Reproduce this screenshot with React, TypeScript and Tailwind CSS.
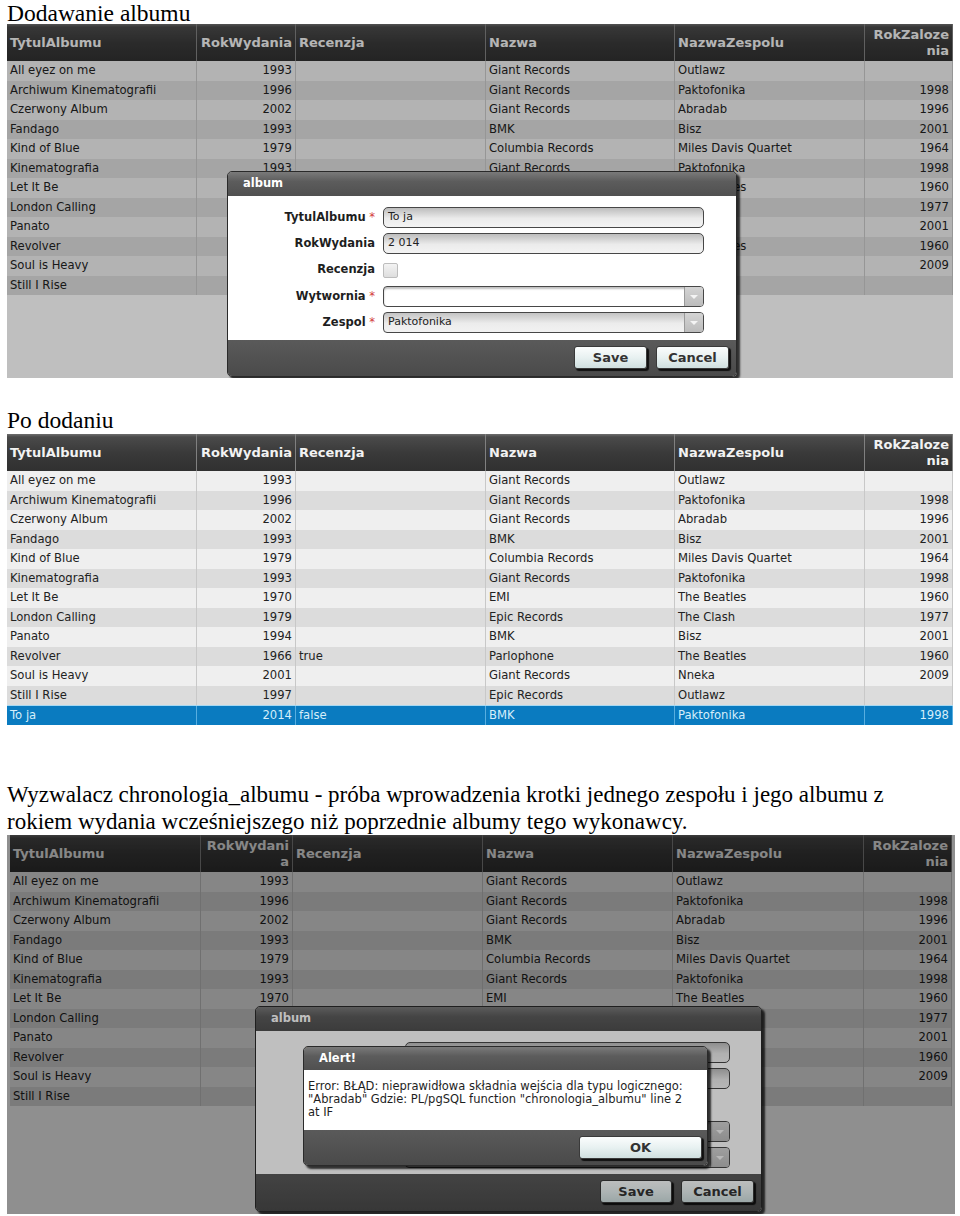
import React from "react";

type Row = [string, string, string, string, string, string];

const DATA: Row[] = [
  ["All eyez on me", "1993", "", "Giant Records", "Outlawz", ""],
  ["Archiwum Kinematografii", "1996", "", "Giant Records", "Paktofonika", "1998"],
  ["Czerwony Album", "2002", "", "Giant Records", "Abradab", "1996"],
  ["Fandago", "1993", "", "BMK", "Bisz", "2001"],
  ["Kind of Blue", "1979", "", "Columbia Records", "Miles Davis Quartet", "1964"],
  ["Kinematografia", "1993", "", "Giant Records", "Paktofonika", "1998"],
  ["Let It Be", "1970", "", "EMI", "The Beatles", "1960"],
  ["London Calling", "1979", "", "Epic Records", "The Clash", "1977"],
  ["Panato", "1994", "", "BMK", "Bisz", "2001"],
  ["Revolver", "1966", "true", "Parlophone", "The Beatles", "1960"],
  ["Soul is Heavy", "2001", "", "Giant Records", "Nneka", "2009"],
  ["Still I Rise", "1997", "", "Epic Records", "Outlawz", ""],
];
const NEW_ROW: Row = ["To ja", "2014", "false", "BMK", "Paktofonika", "1998"];

const HEAD_BG =
  "bg-[linear-gradient(to_bottom,#6e6e6e_0px,#4a4a4a_3px,#3a3a3a_50%,#303030_100%)]";

function Grid({
  cols,
  rows,
  selected,
  narrow,
}: {
  cols: string;
  rows: Row[];
  selected?: Row;
  narrow?: boolean;
}) {
  const right = (i: number) => i === 1 || i === 5;
  return (
    <div className="flex flex-col">
      <div className={`grid ${cols} h-[37px] ${HEAD_BG}`}>
        {["TytulAlbumu", "RokWydania", "Recenzja", "Nazwa", "NazwaZespolu", "RokZalozenia"].map((h, i) => (
          <div
            key={h}
            className={`flex items-center px-[3px] border-r border-[#808080] text-[13px] font-bold text-[#f2f2f2] leading-[16px] whitespace-nowrap overflow-hidden ${
              right(i) ? "justify-end text-right" : "justify-start"
            }`}
          >
            {i === 5 ? (
              <span>
                RokZaloze
                <br />
                nia
              </span>
            ) : i === 1 && narrow ? (
              <span>
                RokWydani
                <br />a
              </span>
            ) : (
              h
            )}
          </div>
        ))}
      </div>
      {rows.map((r, ri) => (
        <div
          key={ri}
          className={`grid ${cols} h-[19.5px] ${ri % 2 === 0 ? "bg-[#efefef]" : "bg-[#dcdcdc]"}`}
        >
          {r.map((c, ci) => (
            <div
              key={ci}
              className={`flex items-center px-[3px] border-r border-[#c8c8c8] text-[11.6px] text-[#222] whitespace-nowrap overflow-hidden ${
                right(ci) ? "justify-end" : "justify-start"
              }`}
            >
              {c}
            </div>
          ))}
        </div>
      ))}
      {selected && (
        <div className={`grid ${cols} h-[19.5px] bg-[#0a7bc0] border-t border-[#a6d8f2]`}>
          {selected.map((c, ci) => (
            <div
              key={ci}
              className={`flex items-center px-[3px] border-r border-[#58aee0] text-[11.6px] text-[#d6eefa] whitespace-nowrap ${
                right(ci) ? "justify-end" : "justify-start"
              }`}
            >
              {c}
            </div>
          ))}
        </div>
      )}
    </div>
  );
}

function Btn({ label, className }: { label: string; className: string }) {
  return (
    <div
      className={`flex items-center justify-center rounded-[3px] border border-[#3a3a3a] bg-[linear-gradient(to_bottom,#fbfdfd,#e8f1f1_50%,#cfdfdf)] shadow-[2px_2px_1px_rgba(0,0,0,0.8)] text-[13px] font-bold text-[#333] ${className}`}
    >
      {label}
    </div>
  );
}

function Field({ value, white }: { value: string; white?: boolean }) {
  return (
    <div
      className={`h-full w-full rounded-[5px] border border-[#474747] flex items-center px-[4px] text-[11px] text-[#222] ${
        white
          ? "bg-white shadow-[inset_0_2px_2px_rgba(0,0,0,0.25)]"
          : "bg-[linear-gradient(to_bottom,#bdbdbd,#ebebeb_55%,#f3f3f3)]"
      }`}
    >
      {value}
    </div>
  );
}

function SelectF({ value, white }: { value: string; white?: boolean }) {
  return (
    <div
      className={`h-full w-full rounded-[4px] border border-[#474747] flex items-stretch overflow-hidden text-[11px] text-[#222] ${
        white
          ? "bg-white shadow-[inset_0_2px_2px_rgba(0,0,0,0.25)]"
          : "bg-[linear-gradient(to_bottom,#c4c4c4,#ececec_55%,#f2f2f2)]"
      }`}
    >
      <div className="flex-1 flex items-center px-[4px]">{value}</div>
      <div className="w-[19px] border-l border-[#9a9a9a] bg-[linear-gradient(to_bottom,#d4d4d4,#bcbcbc)] flex items-center justify-center">
        <div className="w-0 h-0 border-l-[4px] border-r-[4px] border-t-[4px] border-l-transparent border-r-transparent border-t-[#f4f4f4]" />
      </div>
    </div>
  );
}

function Label({ text, req }: { text: string; req?: boolean }) {
  return (
    <div className="flex items-center justify-end text-[11.5px] font-bold text-[#1e1e1e] whitespace-nowrap">
      {text}
      {req && <span className="text-[#d23b3b] font-normal">&nbsp;*</span>}
    </div>
  );
}

function AlbumForm({ cols, filled }: { cols: string; filled: boolean }) {
  return (
    <div className={`grid ${cols} gap-x-[8px] pt-[11px]`}>
      <div className="h-[21px] flex justify-end">
        <Label text="TytulAlbumu" req />
      </div>
      <div className="h-[21px]">
        <Field value={filled ? "To ja" : ""} />
      </div>
      <div className="h-[21px] mt-[5px] flex justify-end">
        <Label text="RokWydania" />
      </div>
      <div className="h-[21px] mt-[5px]">
        <Field value={filled ? "2 014" : ""} />
      </div>
      <div className="h-[22px] mt-[5px] flex justify-end">
        <Label text="Recenzja" />
      </div>
      <div className="h-[22px] mt-[5px] flex items-center">
        <div className="w-[15px] h-[15px] rounded-[2px] border border-[#bdbdbd] bg-[linear-gradient(to_bottom,#f3f3f3,#dedede)]" />
      </div>
      <div className="h-[21px] mt-[5px] flex justify-end">
        <Label text="Wytwornia" req />
      </div>
      <div className="h-[21px] mt-[5px]">
        <SelectF value="" white />
      </div>
      <div className="h-[21px] mt-[5px] flex justify-end">
        <Label text="Zespol" req />
      </div>
      <div className="h-[21px] mt-[5px]">
        <SelectF value={filled ? "Paktofonika" : ""} />
      </div>
    </div>
  );
}

function Window({
  className,
  title,
  titleH,
  bodyH,
  footerH,
  children,
  footer,
}: {
  className: string;
  title: string;
  titleH: string;
  bodyH: string;
  footerH: string;
  children: React.ReactNode;
  footer: React.ReactNode;
}) {
  return (
    <div
      className={`absolute flex flex-col rounded-[5px] border border-[#2a2a2a] overflow-hidden shadow-[3px_3px_2px_rgba(0,0,0,0.75)] ${className}`}
    >
      <div
        className={`${titleH} flex items-center px-[15px] bg-[linear-gradient(to_bottom,#7a7a7a,#5c5c5c_40%,#505050)] text-[11.5px] font-bold text-white`}
      >
        {title}
      </div>
      <div className={`${bodyH} bg-white`}>{children}</div>
      <div
        className={`${footerH} flex items-start justify-end gap-[9px] pt-[6px] pr-[7px] bg-[linear-gradient(to_bottom,#5a5a5a,#4a4a4a)]`}
      >
        {footer}
      </div>
    </div>
  );
}

export default function App() {
  return (
    <div className="w-[960px] h-[1216px] bg-white overflow-hidden font-['DejaVu_Sans',Verdana,sans-serif]">
      <div className="h-[24px] pl-[7px] pt-[1px] font-['Liberation_Serif',serif] text-[23.5px] leading-[24px] text-black whitespace-nowrap">
        Dodawanie albumu
      </div>

      <div className="pl-[7px]">
        <div className="relative w-[946px] h-[354px] bg-white overflow-hidden">
          <Grid cols="grid-cols-[190px_99px_190px_189px_190px_88px]" rows={DATA} />
          <div className="absolute inset-0 bg-black/25" />
          <Window
            className="left-[220px] top-[147px] w-[510px]"
            title="album"
            titleH="h-[24px]"
            bodyH="h-[144px]"
            footerH="h-[36px]"
            footer={
              <>
                <Btn label="Save" className="w-[73px] h-[23px]" />
                <Btn label="Cancel" className="w-[73px] h-[23px]" />
              </>
            }
          >
            <AlbumForm cols="grid-cols-[147px_321px]" filled />
          </Window>
        </div>
      </div>

      <div className="h-[56px] flex items-end pl-[7px] pb-[2px] font-['Liberation_Serif',serif] text-[23.5px] leading-[24px] text-black">
        Po dodaniu
      </div>

      <div className="pl-[7px]">
        <div className="w-[946px] h-[291px] overflow-hidden bg-white">
          <Grid cols="grid-cols-[190px_99px_190px_189px_190px_88px]" rows={DATA} selected={NEW_ROW} />
        </div>
      </div>

      <div className="mt-[56px] pl-[7px] font-['Liberation_Serif',serif] text-[23px] leading-[27px] text-black whitespace-nowrap">
        Wyzwalacz chronologia_albumu - próba wprowadzenia krotki jednego zespołu i jego albumu z
        <br />
        rokiem wydania wcześniejszego niż poprzednie albumy tego wykonawcy.
      </div>

      <div className="pl-[7px]">
        <div className="relative w-[948px] h-[379px] bg-white overflow-hidden pl-[3px] pr-[3px]">
          <Grid cols="grid-cols-[191px_92px_190px_190px_191px_88px]" rows={DATA} narrow />
          <div className="absolute inset-0 bg-black/25" />
          <Window
            className="left-[248px] top-[171px] w-[507px]"
            title="album"
            titleH="h-[24px]"
            bodyH="h-[143px]"
            footerH="h-[37px]"
            footer={
              <>
                <Btn label="Save" className="w-[72px] h-[23px]" />
                <Btn label="Cancel" className="w-[73px] h-[23px]" />
              </>
            }
          >
            <AlbumForm cols="grid-cols-[141px_325px]" filled={false} />
          </Window>
          <div className="absolute inset-0 bg-black/25" />
          <Window
            className="left-[296px] top-[211px] w-[405px]"
            title="Alert!"
            titleH="h-[23px]"
            bodyH="h-[60px]"
            footerH="h-[35px]"
            footer={<Btn label="OK" className="w-[123px] h-[23px] mr-[-2px]" />}
          >
            <div className="pt-[10px] pl-[4px] text-[11.5px] leading-[13px] text-[#1e1e1e] whitespace-nowrap">
              Error: BŁĄD: nieprawidłowa składnia wejścia dla typu logicznego:
              <br />
              "Abradab" Gdzie: PL/pgSQL function "chronologia_albumu" line 2
              <br />
              at IF
            </div>
          </Window>
        </div>
      </div>
    </div>
  );
}
